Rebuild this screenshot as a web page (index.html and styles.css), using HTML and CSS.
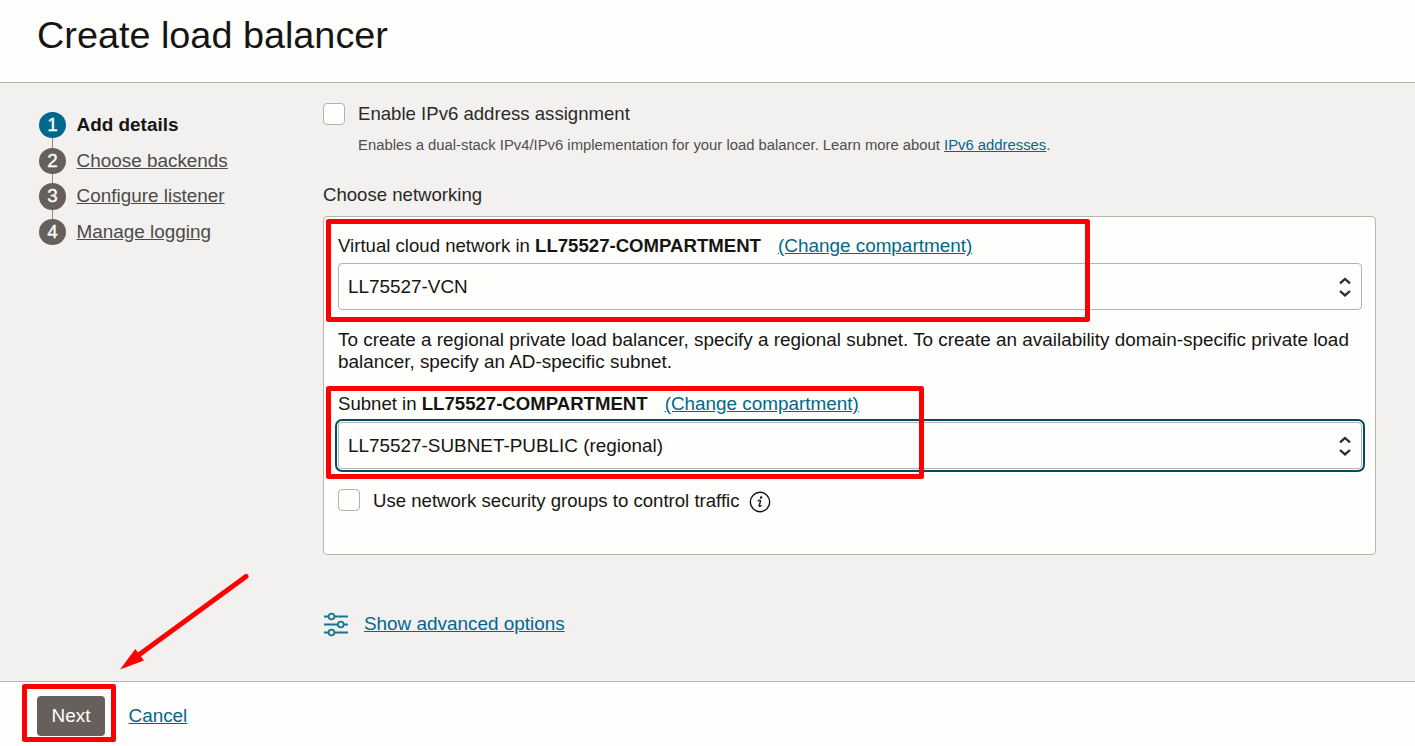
FILE: index.html
```html
<!DOCTYPE html>
<html lang="en">
<head>
<meta charset="utf-8">
<title>Create load balancer</title>
<link rel="stylesheet" href="styles.css">
</head>
<body>
<div class="page">
  <header class="header"><h1>Create load balancer</h1></header>
  <div class="body">
    <ol class="steps">
      <li class="step current"><span class="num">1</span><span class="step-label">Add details</span></li>
      <li class="step"><span class="num">2</span><a class="step-label">Choose backends</a></li>
      <li class="step"><span class="num">3</span><a class="step-label">Configure listener</a></li>
      <li class="step"><span class="num">4</span><a class="step-label">Manage logging</a></li>
    </ol>
    <main class="content">
      <label class="check"><span class="box"></span><span>Enable IPv6 address assignment</span></label>
      <p class="hint">Enables a dual-stack IPv4/IPv6 implementation for your load balancer. Learn more about <a class="link">IPv6 addresses</a>.</p>
      <h2 class="section-title">Choose networking</h2>
      <section class="panel">
        <div class="field-label">Virtual cloud network in <b>LL75527-COMPARTMENT</b><a class="link change">(Change compartment)</a></div>
        <div class="select"><span>LL75527-VCN</span>
          <svg class="arrows" width="12" height="20" viewBox="0 0 12 20"><path d="M1 6.4 6 2l5 4.4M1 14l5 4.4 5-4.4"/></svg>
        </div>
        <p class="note">To create a regional private load balancer, specify a regional subnet. To create an availability domain-specific private load balancer, specify an AD-specific subnet.</p>
        <div class="field-label">Subnet in <b>LL75527-COMPARTMENT</b><a class="link change">(Change compartment)</a></div>
        <div class="select focused"><span>LL75527-SUBNET-PUBLIC (regional)</span>
          <svg class="arrows" width="12" height="20" viewBox="0 0 12 20"><path d="M1 6.4 6 2l5 4.4M1 14l5 4.4 5-4.4"/></svg>
        </div>
        <label class="check groups"><span class="box"></span><span class="groups-text">Use network security groups to control traffic</span>
          <svg class="info" width="22" height="22" viewBox="0 0 22 22"><circle cx="11" cy="11" r="9.7"/><circle class="dot" cx="12.1" cy="6.5" r="1.2"/><path d="M8.8 10.3c1-.9 2.2-1.3 2.6-.9.3.3 0 1.2-.3 2.1l-.8 2.6c-.2.9-.1 1.4.4 1.3.6 0 1.2-.6 1.8-1.3"/></svg>
        </label>
      </section>
      <div class="advanced">
        <svg width="25" height="25" viewBox="0 0 25 25"><path d="M0 4.5h4.5M11 4.5h13M0 12.5h13.5M20 12.5h4M0 20.5h4.5M11 20.5h13"/><circle cx="7.5" cy="4.5" r="2.9"/><circle cx="16.8" cy="12.5" r="2.9"/><circle cx="7.5" cy="20.5" r="2.9"/></svg>
        <a class="link">Show advanced options</a>
      </div>
    </main>
  </div>
  <footer class="footer">
    <button class="next">Next</button>
    <a class="link">Cancel</a>
  </footer>
  <svg class="annotations" width="1415" height="746" viewBox="0 0 1415 746">
    <rect x="328.5" y="221.5" width="759" height="98"/>
    <rect x="328.5" y="388.5" width="593" height="88"/>
    <rect x="24.5" y="686.5" width="89" height="53"/>
    <path class="shaft" d="M246 576.5 138 655.5"/>
    <path class="head" d="M120 669.5 135.3 649 144 660.5z"/>
  </svg>
</div>
</body>
</html>
```
FILE: styles.css
```css
* { box-sizing: border-box; }

body {
  margin: 0;
  background: #f3f1f0;
  color: #161513;
  font: 18.9px/22px "Liberation Sans", Arial, sans-serif;
}

h1, h2, p, ol { margin: 0; padding: 0; font-weight: 400; }

.page {
  position: relative;
  display: flex;
  flex-direction: column;
  width: 1415px;
  height: 746px;
  overflow: hidden;
}

.header {
  height: 83px;
  padding: 13px 0 0 37px;
  background: #fefefc;
  border-bottom: 1px solid #b9b4ae;
}
.header h1 { font-size: 37.8px; line-height: 44px; }

.body { flex: 1; display: flex; }

.steps {
  width: 323px;
  padding: 29.1px 0 0 39px;
  list-style: none;
}
.step {
  display: flex;
  align-items: flex-start;
  gap: 10.6px;
  height: 35.6px;
  color: #4c4a48;
  background: linear-gradient(#8f8a86, #8f8a86) 13px 0 / 1px 100% no-repeat;
}
.step:last-child { background: none; }
.num {
  width: 27px;
  height: 26.4px;
  border-radius: 50%;
  background: #675f5b;
  color: #fff;
  line-height: 25.5px;
  text-align: center;
  -webkit-text-stroke: 0.3px #fff;
}
.step-label { line-height: 26px; text-decoration: underline; }
.current { color: #161513; font-weight: 700; }
.current .num { background: #00688c; font-weight: 400; }
.current .step-label { text-decoration: none; }

.content { width: 1053px; padding-top: 20px; color: #2b2a28; }

.check {
  display: flex;
  align-items: center;
  gap: 13px;
  height: 22px;
  font-size: 18.6px;
}
.box {
  width: 22px;
  height: 22px;
  border: 1px solid #b5b0aa;
  border-radius: 4px;
  background: #fefefc;
}
.hint {
  margin: 11px 0 0 35px;
  color: #4f4d4b;
  font-size: 14.84px;
  line-height: 18px;
}
.section-title { margin-top: 30px; font-size: 18.6px; line-height: 22px; }
.link { color: #00688c; text-decoration: underline; }

.panel {
  height: 339px;
  margin-top: 10px;
  padding: 18px 13px 0 14px;
  border: 1px solid #b9b4ae;
  border-radius: 4px;
  background: #fefefc;
  color: #161513;
}
.field-label { font-size: 18.6px; }
.change { margin-left: 17px; font-size: 18.9px; }
.select {
  display: flex;
  align-items: center;
  justify-content: space-between;
  height: 47px;
  margin-top: 6px;
  padding: 0 10px 0 9px;
  border: 1px solid #b5b2af;
  border-radius: 4px;
}
.focused { margin-top: 7px; outline: 2px solid #004b61; outline-offset: 1px; }
.arrows { fill: none; stroke: #2b2a28; stroke-width: 2.3; }
.note { margin: 19px 0 20px; }
.groups { margin-top: 20px; }
.groups-text { padding-top: 2px; }
.info { margin: 3px 0 0 -4px; fill: none; stroke: #161513; stroke-width: 1.4; }
.info .dot { fill: #161513; stroke: none; }

.advanced {
  display: flex;
  align-items: flex-start;
  gap: 15px;
  margin-top: 57px;
}
.advanced .link { padding-top: 1px; }
.advanced svg { margin-left: 1px; fill: none; stroke: #17748f; stroke-width: 1.8; }

.footer {
  display: flex;
  align-items: center;
  gap: 23.5px;
  height: 65px;
  padding: 3px 0 0 37px;
  background: #fefefc;
  border-top: 1px solid #b9b7b5;
}
.next {
  width: 68px;
  height: 40px;
  padding: 0;
  border: 0;
  border-radius: 4px;
  background: #675f5b;
  color: #fff;
  font: inherit;
}

.annotations {
  position: absolute;
  top: 0;
  left: 0;
  fill: none;
  stroke: #f00;
  stroke-width: 5;
  stroke-linejoin: round;
  pointer-events: none;
}
.shaft { stroke-linecap: round; }
.head { fill: #f00; stroke: none; }
```
